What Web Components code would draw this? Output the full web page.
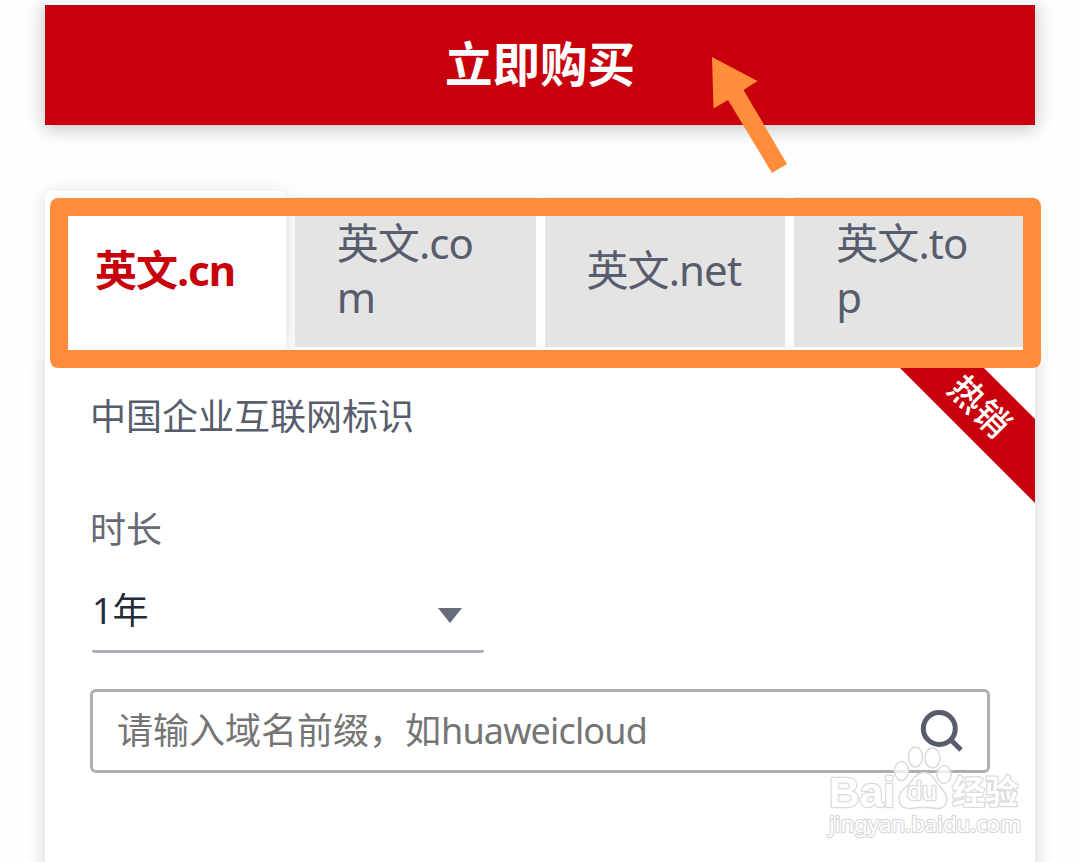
<!DOCTYPE html>
<html lang="zh-CN">
<head>
<meta charset="UTF-8">
<title>域名注册</title>
<style>
  body {
    margin: 0;
    height: 862px;
    overflow: hidden;
    background: #fefefe;
    font-family: "Noto Sans", "Noto Sans CJK SC", sans-serif;
    color: #575d6c;
  }
  /* latin part is set a little tighter than the Chinese */
  .latin {
    letter-spacing: -0.85px;
  }
</style>
</head>
<body>
<domain-page>
  <buy-button>立即购买</buy-button>
  <domain-card>
    <domain-tab slot="tabs" active>英文.cn</domain-tab>
    <domain-tab slot="tabs">英文.com</domain-tab>
    <domain-tab slot="tabs">英文.net</domain-tab>
    <domain-tab slot="tabs">英文.top</domain-tab>
    <hot-ribbon slot="ribbon">热销</hot-ribbon>
    <span slot="desc">中国企业互联网标识</span>
    <duration-select label="时长">1年</duration-select>
    <domain-search>请输入域名前缀，如<span class="latin">huaweicloud</span></domain-search>
  </domain-card>
  <mark-layer slot="overlay"></mark-layer>
  <site-watermark slot="overlay"></site-watermark>
</domain-page>

<script>
function define(name, html) {
  customElements.define(name, class extends HTMLElement {
    constructor() {
      super();
      this.attachShadow({ mode: 'open' });
    }

    connectedCallback() {
      this.shadowRoot.innerHTML = html;
      const label = this.shadowRoot.querySelector('.label');
      if (label) label.textContent = this.getAttribute('label');
    }
  });
}

define('domain-page', `
  <style>
    :host {
      display: block;
      position: relative;
      height: 862px;
      overflow: hidden;
    }
    .column {
      display: flex;
      flex-direction: column;
      gap: 66px;
      padding: 0 45px;
    }
  </style>
  <div class="column"><slot></slot></div>
  <slot name="overlay"></slot>
`);

define('buy-button', `
  <style>
    :host {
      display: block;
      box-shadow: 0 3px 18px rgba(0,0,0,0.25);
    }
    .above {
      height: 5px;
      background: #f5f9fd;
    }
    .button {
      box-sizing: border-box;
      height: 120px;
      padding-bottom: 2px;
      display: flex;
      align-items: center;
      justify-content: center;
      background: #c7000b;
      color: #fff;
      font-size: 47.5px;
      font-weight: bold;
      line-height: 60px;
    }
  </style>
  <div class="above"></div>
  <div class="button"><slot></slot></div>
`);

define('domain-card', `
  <style>
    :host {
      display: block;
    }
    .tabs {
      display: grid;
      grid-template-columns: repeat(4, minmax(0, 1fr));
      gap: 9px;
      height: 159px;
    }
    .panel {
      position: relative;
      height: 560px;
      padding: 0 45px;
      background: #fff;
      box-shadow: 0 6px 18px rgba(0,0,0,0.18);
      clip-path: inset(0 -30px -30px -30px);
    }
    .desc {
      padding: 40px 0 59px;
      font-size: 36px;
      line-height: 54px;
    }
  </style>
  <div class="tabs"><slot name="tabs"></slot></div>
  <div class="panel">
    <slot name="ribbon"></slot>
    <div class="desc"><slot name="desc"></slot></div>
    <slot></slot>
  </div>
`);

define('domain-tab', `
  <style>
    :host {
      box-sizing: border-box;
      display: flex;
      align-items: center;
      margin: 6px 0 3px;
      padding: 0 43px 4px 42px;
      background: #e4e4e4;
      font-size: 42px;
      line-height: 54px;
      letter-spacing: -0.9px;
      word-break: break-all;
    }
    :host([active]) {
      margin: 0;
      padding: 0 44px 1px 50px;
      background: #fff;
      border-radius: 6px 6px 0 0;
      box-shadow: 0 3px 18px rgba(0,0,0,0.14);
      color: #c7000b;
      font-weight: bold;
    }
  </style>
  <span><slot></slot></span>
`);

define('hot-ribbon', `
  <style>
    :host {
      position: absolute;
      top: 0;
      right: 0;
      width: 153px;
      height: 153px;
      background: #c7000b;
      clip-path: polygon(0 0, 84px 0, 100% 69px, 100% 100%);
    }
    span {
      position: absolute;
      left: 98px;
      top: 56px;
      transform: translate(-50%, -50%) rotate(45deg);
      color: #fff;
      font-size: 35px;
      font-weight: 500;
      line-height: 44px;
      white-space: nowrap;
    }
  </style>
  <span><slot></slot></span>
`);

define('duration-select', `
  <style>
    :host {
      display: block;
      font-size: 36px;
    }
    .label {
      line-height: 54px;
      padding-bottom: 16px;
      color: #666a73;
    }
    .select {
      box-sizing: border-box;
      display: flex;
      align-items: center;
      justify-content: space-between;
      width: 392px;
      height: 80px;
      margin-left: 2px;
      padding: 0 22px 6px 0;
      border-bottom: 3px solid #adb0b8;
      border-radius: 2px;
      color: #252b3a;
    }
    svg {
      margin-top: 13px;
    }
  </style>
  <div class="label"></div>
  <div class="select">
    <slot></slot>
    <svg width="24" height="15"><path d="M0 0H24L12 15Z" fill="#666c79"/></svg>
  </div>
`);

define('domain-search', `
  <style>
    :host {
      box-sizing: border-box;
      display: flex;
      align-items: center;
      justify-content: space-between;
      height: 84px;
      margin-top: 36px;
      padding: 0 23px 0 24px;
      border: 3px solid #adb0b2;
      border-radius: 6px;
      color: #757575;
      font-size: 36px;
    }
    span {
      padding-bottom: 5px;
    }
  </style>
  <span><slot></slot></span>
  <svg width="44" height="44" fill="none" stroke="#575d6c" stroke-width="5">
    <circle cx="19.300" cy="19.500" r="16"/>
    <path d="M30.500 30.500L41 41"/>
  </svg>
`);

// Hand-drawn style annotations: frame round the tabs and an arrow to the button
define('mark-layer', `
  <style>
    :host {
      position: absolute;
      left: 0;
      top: 0;
    }
    svg {
      display: block;
    }
  </style>
  <svg width="1080" height="862" fill="#ff8d3a">
    <path fill-rule="evenodd" d="M59 198H1032Q1041 198 1041 207V359Q1041 368 1032 368H59Q50 368 50 359V207Q50 198 59 198ZM68 216V350H1023V216Z"/>
    <path d="M712 57L757.5 81L743.5 90L787 164L772 173L728 100L713.5 108.5Z"/>
  </svg>
`);

define('site-watermark', `
  <style>
    :host {
      position: absolute;
      left: 820px;
      top: 740px;
    }
    svg {
      display: block;
    }
    text {
      paint-order: stroke;
      stroke-linejoin: round;
    }
  </style>
  <svg width="220" height="110" fill="#fff" stroke="#dadada" stroke-width="2.500">
    <g fill-opacity="0.75" stroke-width="1.500">
      <ellipse cx="81.500" cy="31" rx="7" ry="9.500"/>
      <ellipse cx="95.500" cy="17" rx="7" ry="10"/>
      <ellipse cx="112.500" cy="18" rx="7.500" ry="10"/>
      <ellipse cx="124" cy="34.500" rx="7" ry="9"/>
      <path d="M104 32.500C95 32.500 93 42 85 48C75 56 78 69 90 68.500C98 67.500 110 67.500 117 68.500C128 69 130 57 122 49C115 42 113 32.500 104 32.500Z"/>
    </g>
    <text x="9" y="67" font-family="Liberation Sans" font-weight="bold" font-size="43" textLength="66" lengthAdjust="spacingAndGlyphs">Bai</text>
    <text x="87" y="60" font-family="Liberation Sans" font-size="25" textLength="30" lengthAdjust="spacingAndGlyphs">du</text>
    <text x="132" y="64" font-family="Noto Sans CJK SC" font-weight="bold" font-size="33">经验</text>
    <text x="9" y="92" font-family="Noto Sans" font-size="22.500" textLength="192" lengthAdjust="spacingAndGlyphs">jingyan.baidu.com</text>
  </svg>
`);
</script>
</body>
</html>
